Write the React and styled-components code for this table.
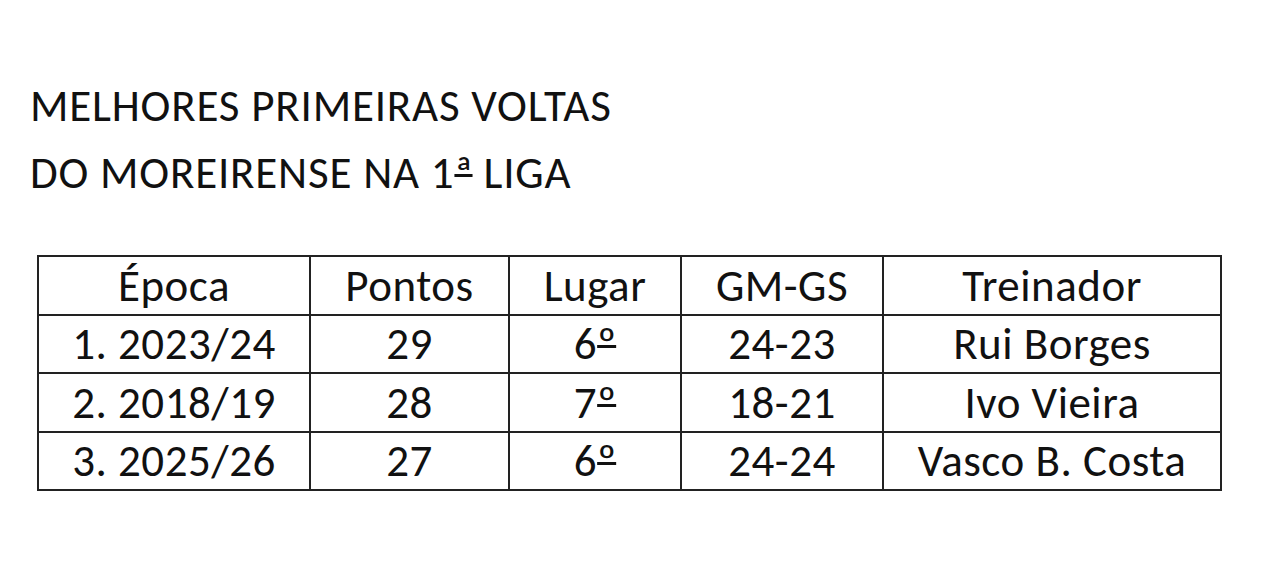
import { createGlobalStyle, styled } from "styled-components";

const GlobalStyle = createGlobalStyle`
  html, body {
    margin: 0;
    padding: 0;
    background: #ffffff;
  }
  body {
    font-family: Carlito, Lato, "Open Sans", sans-serif;
    color: #111111;
  }
`;

const Page = styled.div`
  width: 1280px;
  height: 567px;
  padding: 72px 0 0 30px;
  box-sizing: border-box;
`;

const Title = styled.h1`
  margin: 0;
  font-size: 45px;
  font-weight: 400;
  line-height: 67px;
  letter-spacing: 0.8px;
`;

const Table = styled.table`
  margin: 49px 0 0 7px;
  border-collapse: collapse;
  table-layout: fixed;
  width: 1183px;
`;

const Cell = styled.td`
  border: 2px solid #222222;
  height: 56.5px;
  padding: 0;
  text-align: center;
  vertical-align: middle;
  font-size: 45px;
  line-height: 1;
  letter-spacing: 0.5px;
`;

// ordinal marks drawn with a bar under them, as in the source font
const Ordinal = styled.span`
  letter-spacing: 0;
  text-decoration: underline;
  text-decoration-thickness: 2.5px;
  text-underline-offset: -0.3em;
  text-decoration-skip-ink: none;
`;

const columns = [272, 199, 172, 202, 338];

const header = ["Época", "Pontos", "Lugar", "GM-GS", "Treinador"];

const rows = [
  ["1. 2023/24", "29", ["6", "º"], "24-23", "Rui Borges"],
  ["2. 2018/19", "28", ["7", "º"], "18-21", "Ivo Vieira"],
  ["3. 2025/26", "27", ["6", "º"], "24-24", "Vasco B. Costa"],
];

const renderValue = (v) =>
  Array.isArray(v) ? (
    <>
      {v[0]}
      <Ordinal>{v[1]}</Ordinal>
    </>
  ) : (
    v
  );

const App = () => {
  return (
    <>
      <GlobalStyle />
      <Page>
        <Title>
          MELHORES PRIMEIRAS VOLTAS
          <br />
          DO MOREIRENSE NA 1<Ordinal>ª</Ordinal> LIGA
        </Title>
        <Table>
          <colgroup>
            {columns.map((w, i) => (
              <col key={i} style={{ width: w }} />
            ))}
          </colgroup>
          <tbody>
            <tr>
              {header.map((h) => (
                <Cell key={h}>{h}</Cell>
              ))}
            </tr>
            {rows.map((r) => (
              <tr key={r[0]}>
                {r.map((c, i) => (
                  <Cell key={i}>{renderValue(c)}</Cell>
                ))}
              </tr>
            ))}
          </tbody>
        </Table>
      </Page>
    </>
  );
};

export default App;
